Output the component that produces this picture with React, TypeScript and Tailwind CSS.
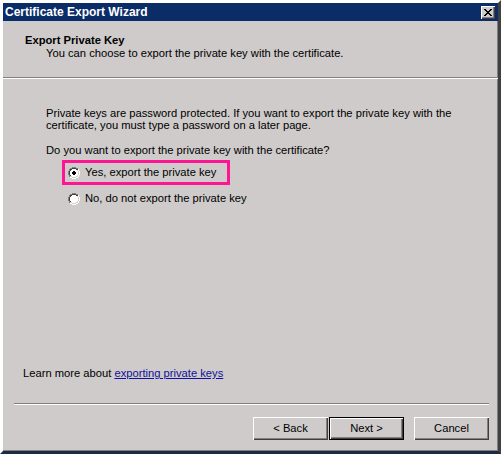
import React from 'react';

// Classic Win2000-style wizard page
const RadioDot: React.FC<{ checked?: boolean }> = ({ checked }) => (
  <svg width="12" height="12" viewBox="0 0 12 12" className="shrink-0">
    <path d="M4 0h4v1H4zM2 1h2v1H2zM8 1h2v1H8zM1 2h1v2H1zM0 4h1v4H0zM1 8h1v2H1z" fill="#808080" />
    <path d="M4 1h4v1H4zM2 2h2v1H2zM8 2h2v1H8zM2 3h1v1H2zM1 4h1v4H1zM2 8h1v1H2z" fill="#404040" />
    <path d="M10 2h1v2h-1zM11 4h1v4h-1zM10 8h1v2h-1zM8 10h2v1H8zM2 10h2v1H2zM4 11h4v1H4z" fill="#ffffff" />
    <path d="M9 3h1v1H9zM10 4h1v4h-1zM9 8h1v1H9zM8 9h2v1H8zM2 9h2v1H2zM4 10h4v1H4z" fill="#d4d0c8" />
    <path d="M4 2h4v1h1v1h1v4h-1v1H8v1H4V9H3V8H2V4h1V3h1z" fill="#ffffff" />
    {checked && <path d="M5 4h2v1h1v2H7v1H5V7H4V5h1z" fill="#000000" />}
  </svg>
);

const WinButton: React.FC<{ label: string; isDefault?: boolean }> = ({ label, isDefault }) => (
  <button
    type="button"
    className={
      isDefault
        ? 'w-[75px] h-[23px] bg-[#cecbca] border border-black shadow-[inset_1px_1px_0_#ffffff,inset_-1px_-1px_0_#404040,inset_-2px_-2px_0_#808080] text-[11.2px] text-black'
        : 'w-[75px] h-[23px] bg-[#cecbca] shadow-[inset_1px_1px_0_#ffffff,inset_-1px_-1px_0_#404040,inset_-2px_-2px_0_#808080] text-[11.2px] text-black'
    }
  >
    {label}
  </button>
);

export default function App() {
  return (
    <div className="w-[501px] h-[454px] bg-[#cecbca] font-['Liberation_Sans',Arial,sans-serif] text-[11.2px] leading-[13px] text-black flex flex-col border-[3px] border-t-[#ffffff] border-l-[#ffffff] border-r-[#404040] border-b-[#1c2a44] shadow-[inset_-1px_-1px_0_#808080]">
      {/* Title bar */}
      <div className="h-[18px] bg-[#0a2d68] flex items-center justify-between pl-[2px] pr-[3px]">
        <span className="text-white font-bold text-[12px]">Certificate Export Wizard</span>
        <div className="w-[14px] h-[13px] bg-[#cecbca] shadow-[inset_1px_1px_0_#ffffff,inset_-1px_-1px_0_#404040,inset_-2px_-2px_0_#808080] flex items-center justify-center">
          <svg width="8" height="7" viewBox="0 0 8 7">
            <path d="M0 0h2v1h1v1h2V1h1V0h2v1H7v1H6v1H5v1h1v1h1v1h1v1H6V6H5V5H3v1H2v1H0V6h1V5h1V4h1V3H2V2H1V1H0z" fill="#000" />
          </svg>
        </div>
      </div>

      {/* Header */}
      <div className="h-[56px] pt-[13px]">
        <div className="pl-[22px] font-bold">Export Private Key</div>
        <div className="pl-[43px]">You can choose to export the private key with the certificate.</div>
      </div>
      <div className="h-[2px] border-t border-t-[#808080] border-b border-b-white" />

      {/* Body */}
      <div className="flex-1 flex flex-col pl-[43px] pt-[28px]">
        <p className="leading-[12px]">
          Private keys are password protected. If you want to export the private key with the
          <br />
          certificate, you must type a password on a later page.
        </p>
        <p className="mt-[13px] leading-[12px]">Do you want to export the private key with the certificate?</p>

        <div className="ml-[16px] mt-[4px] w-[168px] h-[25px] border-[3px] border-[#ff1493] flex items-center pl-[3px] gap-[5px]">
          <RadioDot checked />
          <span>Yes, export the private key</span>
        </div>
        <div className="ml-[22px] mt-[7px] h-[13px] flex items-center gap-[5px]">
          <RadioDot />
          <span>No, do not export the private key</span>
        </div>

        <div className="mt-auto -ml-[23px] pb-[23px]">
          Learn more about{' '}
          <a href="#" className="text-[#10109c] underline">
            exporting private keys
          </a>
        </div>
      </div>

      <div className="ml-[11px] mr-[9px] h-[2px] border-t border-t-[#808080] border-b border-b-white" />

      {/* Buttons */}
      <div className="mt-[12px] mb-[11px] flex justify-end pr-[9px]">
        <WinButton label="< Back" />
        <div className="ml-[1px]">
          <WinButton label="Next >" isDefault />
        </div>
        <div className="ml-[10px]">
          <WinButton label="Cancel" />
        </div>
      </div>
    </div>
  );
}
